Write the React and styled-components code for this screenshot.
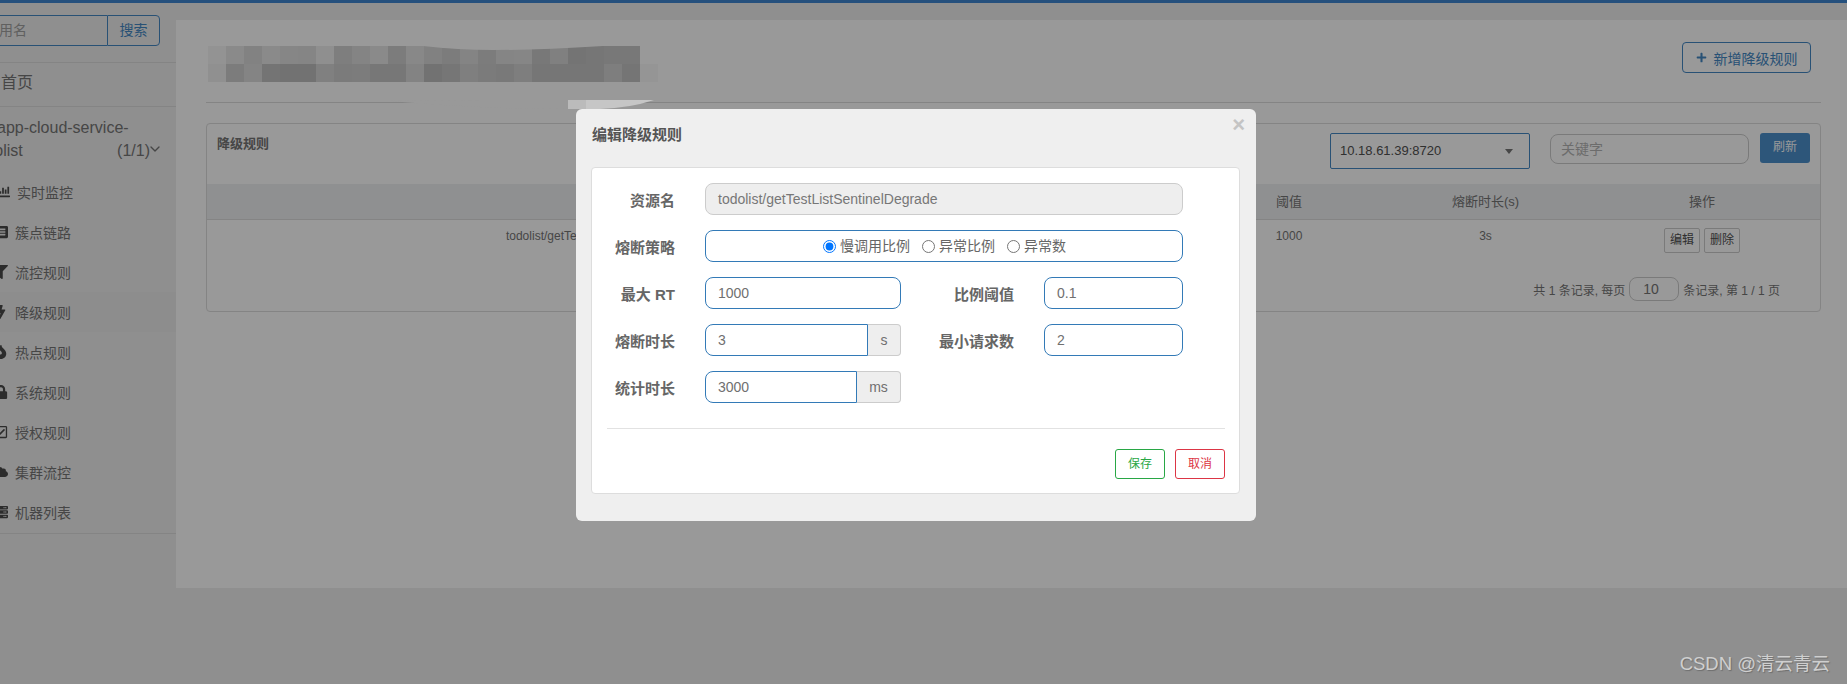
import React from 'react';
import styled, { createGlobalStyle } from 'styled-components';
import { ChevronDown } from 'lucide-react';
import {
  FaBolt,
  FaChartBar,
  FaCloud,
  FaFilter,
  FaFire,
  FaListAlt,
  FaLock,
  FaPlus,
  FaRegCheckSquare,
  FaServer,
} from 'react-icons/fa';

const GlobalStyle = createGlobalStyle`
  html, body {
    margin: 0;
    padding: 0;
    background: #eeeeee;
  }
  body {
    font-family: "Liberation Sans", "Noto Sans CJK SC", sans-serif;
    overflow: hidden;
  }
  * {
    box-sizing: border-box;
  }
`;

const Page = styled.div`
  position: relative;
  width: 1847px;
  height: 684px;
  overflow: hidden;
  background: #eeeeee;
  display: flex;
  flex-direction: column;
`;

const TopBar = styled.div`
  height: 3px;
  flex: none;
  background: #3f86d0;
`;

const Columns = styled.div`
  display: flex;
  align-items: flex-start;
`;

const Sidebar = styled.aside`
  width: 176px;
  flex: none;
  color: #757575;
`;

const SearchSection = styled.div`
  height: 60px;
  padding-top: 12px;
  border-bottom: 1px solid #dcdcdc;
`;

const SearchGroup = styled.div`
  display: flex;
  width: 188px;
  height: 31px;
  margin-left: -28px;
`;

const SearchInput = styled.div`
  flex: 1;
  padding-left: 12px;
  font-size: 14px;
  line-height: 29px;
  color: #a0a0a0;
  border: 1px solid #4387c4;
  border-right: 0;
`;

const SearchButton = styled.div`
  width: 53px;
  text-align: center;
  font-size: 14px;
  line-height: 29px;
  color: #4387c4;
  border: 1px solid #4387c4;
  border-radius: 0 4px 4px 0;
`;

const HomeLink = styled.div`
  height: 44px;
  padding-left: 1px;
  font-size: 16px;
  line-height: 40px;
  border-bottom: 1px solid #dcdcdc;
`;

const AppBlock = styled.div`
  padding: 9px 0 10px;
  font-size: 16px;
  line-height: 23px;
  white-space: nowrap;
`;

const AppLine = styled.div`
  margin-left: -3px;
`;

const AppRow = styled.div`
  display: flex;
  align-items: center;
  width: 188px;
  margin-left: -28px;
`;

const AppName = styled.span`
  flex: 1;
`;

const AppChevron = styled(ChevronDown)`
  margin: -3px -3px 0 -3px;
  flex: none;
`;

const NavList = styled.nav`
  padding-bottom: 1px;
  border-bottom: 1px solid #dcdcdc;
`;

const NavItem = styled.div`
  display: flex;
  align-items: center;
  gap: 7px;
  height: 40px;
  padding-left: ${(p) => p.$shift || 0}px;
  margin-left: -6px;
  font-size: 14px;
  background: ${(p) => (p.$active ? '#ebebeb' : 'transparent')};
`;

const NavIcon = styled.span`
  display: flex;
  justify-content: center;
  width: 14px;
  color: #4a4a4a;
`;

const Main = styled.main`
  flex: 1;
  height: 568px;
  margin-top: 17px;
  padding: 0 26px 0 30px;
  background: #ffffff;
`;

const TitleBar = styled.div`
  display: flex;
  justify-content: space-between;
  align-items: flex-start;
  height: 83px;
  border-bottom: 1px solid #dcdcdc;
`;

const Mosaic = styled.svg`
  display: block;
  margin: 26px 0 0 2px;
`;

const AddButton = styled.div`
  display: flex;
  align-items: center;
  justify-content: center;
  gap: 7px;
  width: 129px;
  height: 31px;
  margin: 22px 10px 0 0;
  font-size: 14px;
  color: #4387c4;
  border: 1px solid #4387c4;
  border-radius: 4px;
`;

const Card = styled.section`
  height: 189px;
  margin-top: 20px;
  border: 1px solid #dcdcdc;
  border-radius: 4px;
`;

const Toolbar = styled.div`
  display: flex;
  justify-content: space-between;
  align-items: flex-start;
  height: 60px;
  padding: 9px 10px 0 10px;
`;

const CardTitle = styled.h3`
  margin: 2px 0 0;
  font-size: 13px;
  line-height: 18px;
  font-weight: 700;
  color: #757575;
`;

const Controls = styled.div`
  display: flex;
  align-items: flex-start;
`;

const SelectBox = styled.div`
  position: relative;
  width: 200px;
  height: 36px;
  padding-left: 9px;
  font-size: 13px;
  line-height: 34px;
  color: #505050;
  border: 1px solid #4387c4;
  border-radius: 2px;

  &::after {
    content: '';
    position: absolute;
    right: 16px;
    top: 15px;
    border-style: solid;
    border-width: 5px 4.5px 0;
    border-color: #777777 transparent transparent;
  }
`;

const KeywordInput = styled.div`
  width: 199px;
  height: 30px;
  margin: 1px 11px 0 20px;
  padding-left: 10px;
  font-size: 14px;
  line-height: 28px;
  color: #b5b5b5;
  border: 1px solid #cccccc;
  border-radius: 8px;
`;

const RefreshButton = styled.div`
  width: 50px;
  height: 30px;
  font-size: 12px;
  line-height: 29px;
  text-align: center;
  color: #ffffff;
  background: #4b8fcc;
  border-radius: 3px;
`;

const Grid = styled.div`
  display: grid;
  grid-template-columns: 786px 207px 178px 215px 218px;
`;

const HeadRow = styled(Grid)`
  height: 36px;
  background: #eef0f2;
  border-bottom: 1px solid #dcdcdc;
`;

const HeadCell = styled.div`
  font-size: 13px;
  line-height: 35px;
  text-align: center;
  color: #757575;
`;

const BodyRow = styled(Grid)`
  height: 48px;
`;

const BodyCell = styled.div`
  display: flex;
  justify-content: center;
  gap: 4px;
  padding-top: 8px;
  font-size: 12px;
  line-height: 17px;
  color: #757575;
`;

const SmallButton = styled.div`
  width: 36px;
  height: 25px;
  font-size: 12px;
  line-height: 23px;
  text-align: center;
  color: #505050;
  border: 1px solid #cccccc;
  border-radius: 2px;
`;

const Pager = styled.div`
  display: flex;
  justify-content: flex-end;
  align-items: center;
  gap: 4px;
  height: 24px;
  margin-top: 9px;
  padding-right: 40px;
  font-size: 12px;
  color: #757575;
`;

const PageSize = styled.div`
  width: 50px;
  height: 24px;
  padding-left: 13px;
  font-size: 14px;
  line-height: 22px;
  border: 1px solid #cccccc;
  border-radius: 8px;
`;

const Backdrop = styled.div`
  position: absolute;
  inset: 0;
  background: rgba(0, 0, 0, 0.4);
`;

const Smudge = styled.svg`
  position: absolute;
  left: 390px;
  top: 98px;
`;

const Modal = styled.div`
  position: absolute;
  left: 576px;
  top: 109px;
  width: 680px;
  height: 412px;
  padding: 0 16px 0 15px;
  background: #efefef;
  border-radius: 6px;
`;

const ModalTitle = styled.h4`
  margin: 0;
  height: 58px;
  padding-left: 1px;
  font-size: 15px;
  line-height: 52px;
  font-weight: 700;
  color: #555555;
`;

const CloseMark = styled.span`
  position: absolute;
  right: 11px;
  top: 3px;
  font-size: 22px;
  line-height: 26px;
  font-weight: 700;
  color: #c4c4c4;
`;

const FormPanel = styled.div`
  height: 327px;
  padding: 15px 14px 0 15px;
  background: #ffffff;
  border: 1px solid #dddddd;
  border-radius: 4px;
`;

const FormGrid = styled.div`
  display: grid;
  grid-template-columns: 68px 196px 83px 139px;
  grid-auto-rows: 32px;
  column-gap: 30px;
  row-gap: 15px;
`;

const Label = styled.label`
  font-size: 15px;
  line-height: 35px;
  font-weight: 700;
  text-align: right;
  white-space: nowrap;
  color: #666666;
`;

const Field = styled.div`
  grid-column: ${(p) => (p.$wide ? '2 / -1' : 'auto')};
  height: 32px;
  padding-left: 12px;
  font-size: 14px;
  line-height: 30px;
  color: ${(p) => (p.$disabled ? '#777777' : '#707070')};
  background: ${(p) => (p.$disabled ? '#eeeeee' : '#ffffff')};
  border: 1px solid ${(p) => (p.$disabled ? '#cccccc' : '#337ab7')};
  border-radius: 8px;
`;

const RadioField = styled(Field)`
  display: flex;
  justify-content: center;
  align-items: center;
  gap: 12px;
  padding: 0 0 0 1px;
  color: #666666;
`;

const RadioOption = styled.span`
  display: flex;
  align-items: center;
  gap: 4px;
`;

const Radio = styled.input`
  width: 13px;
  height: 13px;
  margin: 0;
`;

const InputGroup = styled.div`
  display: flex;
  height: 32px;
`;

const GroupInput = styled.div`
  flex: 1;
  padding-left: 12px;
  font-size: 14px;
  line-height: 30px;
  color: #707070;
  border: 1px solid #337ab7;
  border-radius: 8px 0 0 8px;
`;

const Addon = styled.div`
  width: ${(p) => p.$width}px;
  font-size: 14px;
  line-height: 30px;
  text-align: center;
  color: #707070;
  background: #eeeeee;
  border: 1px solid #cccccc;
  border-left: 0;
  border-radius: 0 4px 4px 0;
`;

const FormDivider = styled.div`
  height: 1px;
  margin-top: 25px;
  background: #e2e2e2;
`;

const FormActions = styled.div`
  display: flex;
  justify-content: flex-end;
  gap: 10px;
  margin-top: 20px;
`;

const ActionButton = styled.div`
  width: 50px;
  height: 30px;
  font-size: 12px;
  line-height: 28px;
  text-align: center;
  color: ${(p) => p.$color};
  background: #ffffff;
  border: 1px solid ${(p) => p.$color};
  border-radius: 3px;
`;

const Watermark = styled.div`
  position: absolute;
  right: 17px;
  bottom: 9px;
  font-size: 18.5px;
  line-height: 22px;
  color: #cfcfcf;
  text-shadow: 1px 1px 1px #6e6e6e;
`;

const navItems = [
  { icon: <FaChartBar size={14} />, text: '实时监控', shift: 2 },
  { icon: <FaListAlt size={14} />, text: '簇点链路' },
  { icon: <FaFilter size={14} />, text: '流控规则' },
  { icon: <FaBolt size={14} />, text: '降级规则', active: true },
  { icon: <FaFire size={14} />, text: '热点规则' },
  { icon: <FaLock size={14} />, text: '系统规则' },
  { icon: <FaRegCheckSquare size={14} />, text: '授权规则' },
  { icon: <FaCloud size={14} />, text: '集群流控' },
  { icon: <FaServer size={14} />, text: '机器列表' },
];

// shades of the pixelated title as seen under the backdrop
const mosaicRows = [
  [0x93, 0x8a, 0x82, 0x8a, 0x86, 0x85, 0x8f, 0x7e, 0x84, 0x8a, 0x7c, 0x88, 0x81, 0x7c, 0x84, 0x7c, 0x85, 0x86, 0x78, 0x80, 0x74, 0x76, 0x78, 0x78],
  [0x90, 0x7c, 0x84, 0x74, 0x72, 0x72, 0x80, 0x7b, 0x7c, 0x77, 0x77, 0x83, 0x72, 0x76, 0x7f, 0x7b, 0x79, 0x7e, 0x76, 0x76, 0x76, 0x76, 0x7e, 0x75],
];

const undim = (v) => {
  const c = Math.min(255, Math.round(v / 0.6));
  return `rgb(${c},${c},${c})`;
};

const TitleMosaic = () => (
  <Mosaic width="450" height="36" viewBox="0 0 450 36">
    {mosaicRows.map((row, y) =>
      row.map((shade, x) => (
        <rect key={`${x}-${y}`} x={x * 18} y={y * 18} width="18" height="18" fill={undim(shade)} />
      ))
    )}
    <rect x="432" y="18" width="18" height="18" fill={undim(0x95)} />
    <path d="M215 0 Q250 4 285 4 Q330 4 395 0 Z" fill="#ffffff" />
  </Mosaic>
);

const App = () => (
  <Page>
    <GlobalStyle />
    <TopBar />
    <Columns>
      <Sidebar>
        <SearchSection>
          <SearchGroup>
            <SearchInput>应用名</SearchInput>
            <SearchButton>搜索</SearchButton>
          </SearchGroup>
        </SearchSection>
        <HomeLink>首页</HomeLink>
        <AppBlock>
          <AppLine>app-cloud-service-</AppLine>
          <AppRow>
            <AppName>todolist</AppName>
            <span>(1/1)</span>
            <AppChevron size={16} strokeWidth={2} />
          </AppRow>
        </AppBlock>
        <NavList>
          {navItems.map((item) => (
            <NavItem key={item.text} $shift={item.shift} $active={item.active}>
              <NavIcon>{item.icon}</NavIcon>
              {item.text}
            </NavItem>
          ))}
        </NavList>
      </Sidebar>
      <Main>
        <TitleBar>
          <TitleMosaic />
          <AddButton>
            <FaPlus size={11} />
            新增降级规则
          </AddButton>
        </TitleBar>
        <Card>
          <Toolbar>
            <CardTitle>降级规则</CardTitle>
            <Controls>
              <SelectBox>10.18.61.39:8720</SelectBox>
              <KeywordInput>关键字</KeywordInput>
              <RefreshButton>刷新</RefreshButton>
            </Controls>
          </Toolbar>
          <HeadRow>
            <HeadCell />
            <HeadCell />
            <HeadCell>阈值</HeadCell>
            <HeadCell>熔断时长(s)</HeadCell>
            <HeadCell>操作</HeadCell>
          </HeadRow>
          <BodyRow>
            <BodyCell>todolist/getTestListSentinelDegrade</BodyCell>
            <BodyCell />
            <BodyCell>1000</BodyCell>
            <BodyCell>3s</BodyCell>
            <BodyCell>
              <SmallButton>编辑</SmallButton>
              <SmallButton>删除</SmallButton>
            </BodyCell>
          </BodyRow>
          <Pager>
            共 1 条记录, 每页
            <PageSize>10</PageSize>
            条记录, 第 1 / 1 页
          </Pager>
        </Card>
      </Main>
    </Columns>
    <Backdrop />
    <Smudge width="270" height="12" viewBox="0 0 270 12">
      <path d="M0 3 Q90 11 178 11 V2 H90 Z" fill="#999999" />
      <path d="M178 2 H196 V11 H178 Z" fill="#bbbbbb" />
      <path d="M196 2 H264 Q240 10 210 11 H196 Z" fill="#c6c6c6" />
    </Smudge>
    <Modal>
      <CloseMark>×</CloseMark>
      <ModalTitle>编辑降级规则</ModalTitle>
      <FormPanel>
        <FormGrid>
          <Label>资源名</Label>
          <Field $wide $disabled>todolist/getTestListSentinelDegrade</Field>
          <Label>熔断策略</Label>
          <RadioField $wide>
            <RadioOption>
              <Radio type="radio" name="grade" defaultChecked />
              慢调用比例
            </RadioOption>
            <RadioOption>
              <Radio type="radio" name="grade" />
              异常比例
            </RadioOption>
            <RadioOption>
              <Radio type="radio" name="grade" />
              异常数
            </RadioOption>
          </RadioField>
          <Label>最大 RT</Label>
          <Field>1000</Field>
          <Label>比例阈值</Label>
          <Field>0.1</Field>
          <Label>熔断时长</Label>
          <InputGroup>
            <GroupInput>3</GroupInput>
            <Addon $width={33}>s</Addon>
          </InputGroup>
          <Label>最小请求数</Label>
          <Field>2</Field>
          <Label>统计时长</Label>
          <InputGroup>
            <GroupInput>3000</GroupInput>
            <Addon $width={44}>ms</Addon>
          </InputGroup>
        </FormGrid>
        <FormDivider />
        <FormActions>
          <ActionButton $color="#28a745">保存</ActionButton>
          <ActionButton $color="#dc3545">取消</ActionButton>
        </FormActions>
      </FormPanel>
    </Modal>
    <Watermark>CSDN @清云青云</Watermark>
  </Page>
);

export default App;
